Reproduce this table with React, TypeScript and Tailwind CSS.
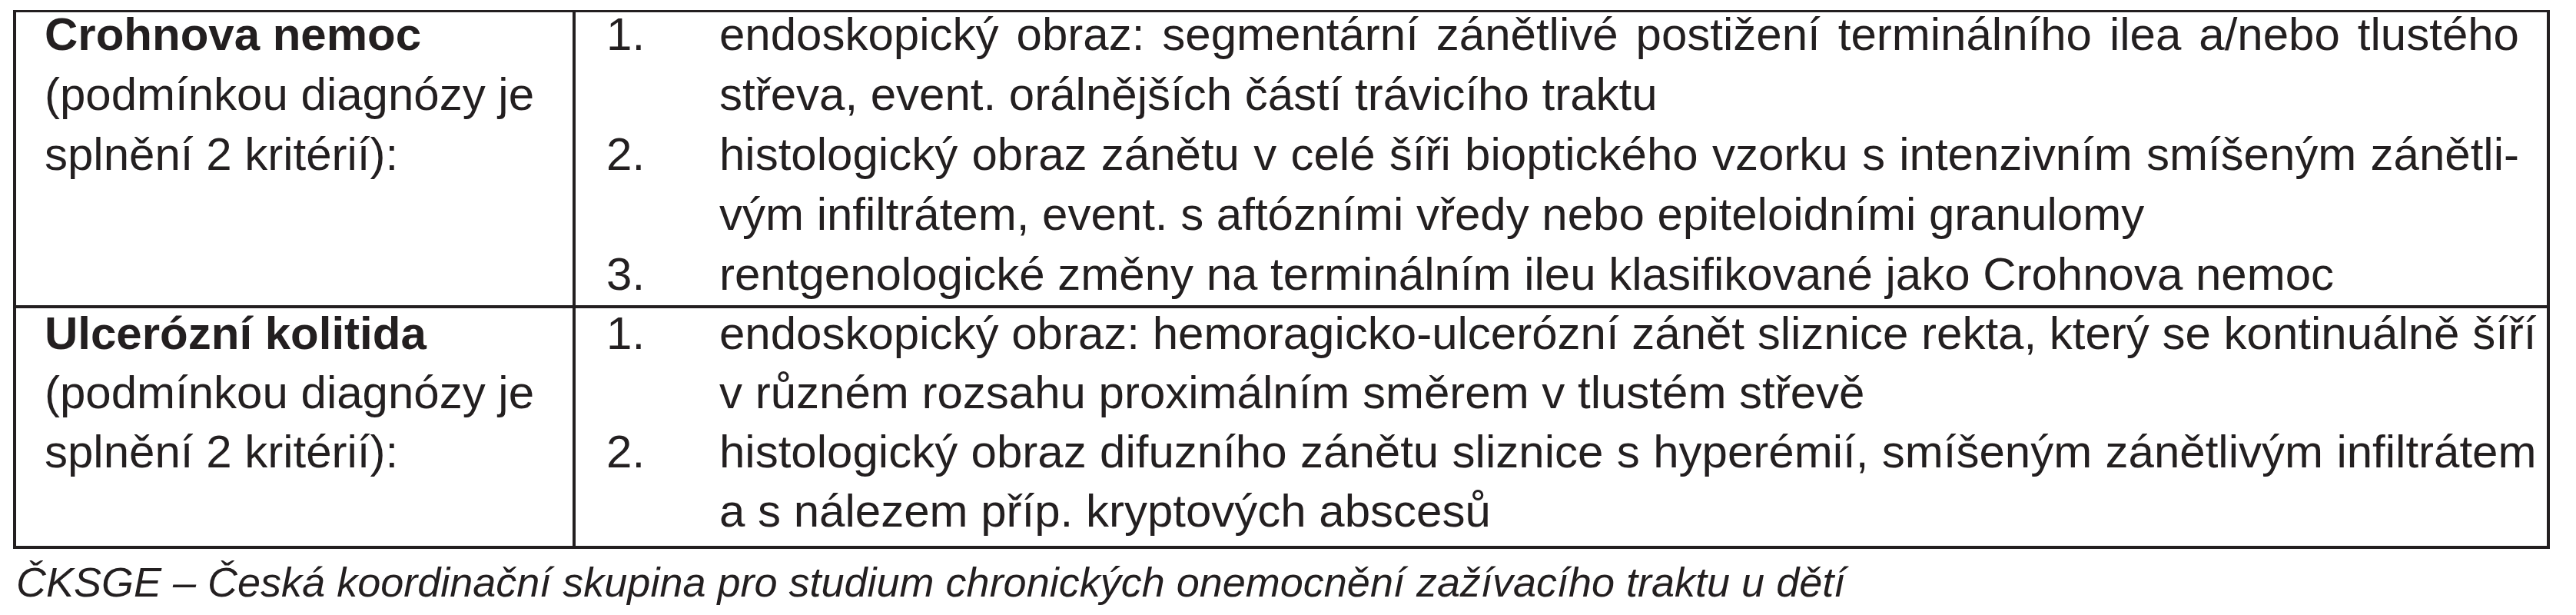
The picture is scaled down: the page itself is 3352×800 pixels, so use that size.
/**
 * Diagnostická kritéria ČKSGE — tabulka Crohnova nemoc / Ulcerózní kolitida.
 *
 * Řádky textu jsou zalomené ručně podle předlohy (včetně dělení „zánětli-/vým“),
 * nezávěrečné řádky odstavce jsou do bloku.
 */

type Criterion = { lines: string[] };

type Disease = {
  title: string;
  note: string[];
  criteria: Criterion[];
  // posun prvního řádku a výška řádku se v předloze mírně liší
  lead: string;
  shift: string;
  pad: string;
};

const DISEASES: Disease[] = [
  {
    title: 'Crohnova nemoc',
    note: ['(podmínkou diagnózy je', 'splnění 2 kritérií):'],
    criteria: [
      {
        lines: [
          'endoskopický obraz: segmentární zánětlivé postižení terminálního ilea a/nebo tlustého',
          'střeva, event. orálnějších částí trávicího traktu',
        ],
      },
      {
        lines: [
          'histologický obraz zánětu v celé šíři bioptického vzorku s intenzivním smíšeným zánětli-',
          'vým infiltrátem, event. s aftózními vředy nebo epiteloidními granulomy',
        ],
      },
      { lines: ['rentgenologické změny na terminálním ileu klasifikované jako Crohnova nemoc'] },
    ],
    lead: 'leading-[78px]',
    shift: '-mt-[10px]',
    pad: 'pb-[1px]',
  },
  {
    title: 'Ulcerózní kolitida',
    note: ['(podmínkou diagnózy je', 'splnění 2 kritérií):'],
    criteria: [
      {
        lines: [
          'endoskopický obraz: hemoragicko-ulcerózní zánět sliznice rekta, který se kontinuálně šíří',
          'v různém rozsahu proximálním směrem v tlustém střevě',
        ],
      },
      {
        lines: [
          'histologický obraz difuzního zánětu sliznice s hyperémií, smíšeným zánětlivým infiltrátem',
          'a s nálezem příp. kryptových abscesů',
        ],
      },
    ],
    lead: 'leading-[77px]',
    shift: '-mt-[6px]',
    pad: 'pb-[7px]',
  },
];

function CriterionItem({ index, criterion }: { index: number; criterion: Criterion }) {
  const last = criterion.lines.length - 1;
  return (
    <div className="flex">
      <span className="w-[147px] shrink-0">{index + 1}.</span>
      <div className="flex-1">
        {criterion.lines.map((line, i) => (
          <div
            key={i}
            className={
              i < last
                ? 'whitespace-nowrap text-justify [text-align-last:justify]'
                : 'whitespace-nowrap'
            }
          >
            {line}
          </div>
        ))}
      </div>
    </div>
  );
}

function DiseaseRow({ disease, first }: { disease: Disease; first: boolean }) {
  return (
    <div className={first ? 'flex' : 'flex border-t-[4px] border-[#231f20]'}>
      {/* Název onemocnění */}
      <div className={`w-[728px] shrink-0 border-r-[4px] border-[#231f20] pl-[37px] ${disease.pad}`}>
        <div className={`${disease.shift} ${disease.lead}`}>
          <div className="font-bold whitespace-nowrap">{disease.title}</div>
          {disease.note.map((n) => (
            <div key={n} className="whitespace-nowrap">
              {n}
            </div>
          ))}
        </div>
      </div>

      {/* Kritéria */}
      <div className={`flex-1 pl-[40px] pr-[36px] ${disease.pad}`}>
        <div className={`${disease.shift} ${disease.lead}`}>
          {disease.criteria.map((c, i) => (
            <CriterionItem key={i} index={i} criterion={c} />
          ))}
        </div>
      </div>
    </div>
  );
}

export default function App() {
  return (
    <div className="w-[3352px] h-[800px] overflow-hidden bg-white text-[#231f20] font-['Liberation_Sans',Arial,sans-serif]">
      <div className="ml-[17px] mt-[13px] w-[3301px] border-[4px] border-t-[3px] border-[#231f20] text-[60px]">
        {DISEASES.map((d, i) => (
          <DiseaseRow key={d.title} disease={d} first={i === 0} />
        ))}
      </div>
      <p className="mt-[12px] pl-[21px] text-[54px] leading-[62px] italic whitespace-nowrap">
        ČKSGE – Česká koordinační skupina pro studium chronických onemocnění zažívacího traktu u dětí
      </p>
    </div>
  );
}
